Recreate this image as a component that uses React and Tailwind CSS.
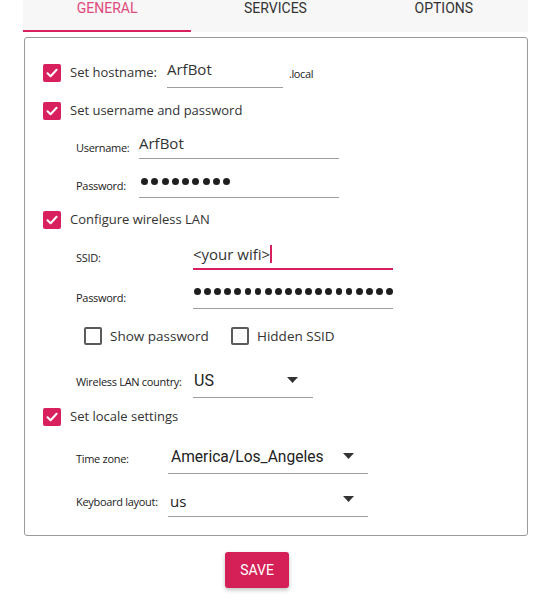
import React from 'react'

const PINK = 'bg-[#d9205e]'

function Check({ checked }) {
  if (!checked) {
    return <span className="block w-[18px] h-[18px] shrink-0 rounded-[2px] border-2 border-[#5a5a5a] bg-white" />
  }
  return (
    <span className={`flex w-[18px] h-[18px] shrink-0 items-center justify-center rounded-[2px] ${PINK}`}>
      <svg width="14" height="14" viewBox="0 0 14 14" fill="none">
        <path d="M2.5 7.2 L5.6 10.2 L11.6 3.8" stroke="white" strokeWidth="2" strokeLinecap="round" strokeLinejoin="round" />
      </svg>
    </span>
  )
}

function CheckRow({ label, checked = true, className = '' }) {
  return (
    <div className={`flex items-center h-[18px] ${className}`}>
      <Check checked={checked} />
      <span className="ml-[9px] text-[13px] text-[#333] font-['Open_Sans',sans-serif] whitespace-nowrap">{label}</span>
    </div>
  )
}

function Dots({ n }) {
  return (
    <div className="flex gap-[3.3px]">
      {Array.from({ length: n }).map((_, i) => (
        <span key={i} className="block w-[7px] h-[7px] rounded-full bg-[#1f1f1f]" />
      ))}
    </div>
  )
}

function Caret() {
  return (
    <svg width="11" height="6" viewBox="0 0 11 6">
      <path d="M0 0 H11 L5.5 6 Z" fill="#333" />
    </svg>
  )
}

function SubLabel({ children, w }) {
  return (
    <span className={`${w} shrink-0 text-[11px] text-[#222] font-['Open_Sans',sans-serif] tracking-[-0.3px] whitespace-nowrap`}>
      {children}
    </span>
  )
}

export default function App() {
  return (
    <div className="w-[538px] h-[603px] bg-white overflow-hidden">
      {/* tabs */}
      <div className="ml-[23px] w-[505px] h-[32px] bg-[#f7f7f7] flex font-['Roboto',sans-serif] text-[14px] leading-[16px]">
        <div className="flex-1 text-center text-[#de4a7c] border-b-2 border-[#d9205e]">GENERAL</div>
        <div className="flex-1 text-center text-[#333]">SERVICES</div>
        <div className="flex-1 text-center text-[#333]">OPTIONS</div>
      </div>

      {/* general panel */}
      <div className="mt-[5px] ml-[24px] w-[504px] h-[499px] border border-[#9a9a9a] rounded-[3px] pt-[20px] pl-[18px] flex flex-col">
        <div className="flex items-center h-[30px]">
          <Check checked />
          <span className="ml-[9px] w-[97px] text-[13px] text-[#333] font-['Open_Sans',sans-serif] whitespace-nowrap">Set hostname:</span>
          <div className="w-[116px] h-full border-b border-[#9e9e9e] text-[15px] leading-[18px] text-[#333] font-['Open_Sans',sans-serif] pt-[2px]">
            ArfBot
          </div>
          <span className="ml-[6px] mt-[3px] text-[11px] text-[#222] font-['Open_Sans',sans-serif] tracking-[-0.4px]">.local</span>
        </div>

        <CheckRow label="Set username and password" className="mt-[14px]" />

        <div className="mt-[15px] ml-[33px] flex items-end h-[24px]">
          <SubLabel w="w-[63px] mb-[3px]">Username:</SubLabel>
          <div className="w-[200px] h-full border-b border-[#9e9e9e] text-[15px] leading-[16px] text-[#333] font-['Open_Sans',sans-serif]">
            ArfBot
          </div>
        </div>

        <div className="mt-[15px] ml-[33px] flex items-end h-[24px]">
          <SubLabel w="w-[63px] mb-[4px]">Password:</SubLabel>
          <div className="w-[200px] h-full border-b border-[#9e9e9e] pt-[4px] pl-[2px]">
            <Dots n={9} />
          </div>
        </div>

        <CheckRow label="Configure wireless LAN" className="mt-[13px]" />

        <div className="mt-[15px] ml-[33px] flex items-end h-[26px]">
          <SubLabel w="w-[117px] mb-[4px]">SSID:</SubLabel>
          <div className="w-[200px] h-full border-b-2 border-[#d9205e] text-[15px] leading-[18px] text-[#333] font-['Open_Sans',sans-serif] flex items-start pt-[1px]">
            <span>&lt;your wifi&gt;</span>
            <span className="block w-[2px] h-[18px] bg-[#d9205e]" />
          </div>
        </div>

        <div className="mt-[14px] ml-[33px] flex items-end h-[25px]">
          <SubLabel w="w-[117px] mb-[3px]">Password:</SubLabel>
          <div className="w-[200px] h-full border-b border-[#9e9e9e] pt-[4px] pl-[1px]">
            <Dots n={20} />
          </div>
        </div>

        <div className="mt-[18px] ml-[41px] flex items-center h-[18px] font-['Open_Sans',sans-serif] text-[13.5px] text-[#333]">
          <div className="w-[147px] flex items-center">
            <Check checked={false} />
            <span className="ml-[8px] whitespace-nowrap">Show password</span>
          </div>
          <Check checked={false} />
          <span className="ml-[8px] whitespace-nowrap">Hidden SSID</span>
        </div>

        <div className="mt-[23px] ml-[33px] flex items-end h-[30px]">
          <SubLabel w="w-[117px] mb-[8px]">Wireless LAN country:</SubLabel>
          <div className="w-[120px] h-full border-b border-[#9e9e9e] flex items-start pt-[4px] pl-[1px] pr-[15px] font-['Roboto',sans-serif] text-[16px] leading-[18px] text-[#222]">
            <span className="flex-1">US</span>
            <span className="mt-[5px]"><Caret /></span>
          </div>
        </div>

        <CheckRow label="Set locale settings" className="mt-[10px]" />

        <div className="mt-[16px] ml-[33px] flex items-end h-[32px]">
          <SubLabel w="w-[92px] mb-[7px]">Time zone:</SubLabel>
          <div className="w-[200px] h-full border-b border-[#9e9e9e] flex items-start pt-[6px] pl-[3px] pr-[14px] font-['Roboto',sans-serif] text-[15.6px] leading-[18px] text-[#222]">
            <span className="flex-1">America/Los_Angeles</span>
            <span className="mt-[5px]"><Caret /></span>
          </div>
        </div>

        <div className="mt-[12px] ml-[33px] flex items-end h-[31px]">
          <SubLabel w="w-[92px] mb-[7px]">Keyboard layout:</SubLabel>
          <div className="w-[200px] h-full border-b border-[#9e9e9e] flex items-start pt-[6px] pl-[2px] pr-[14px] font-['Open_Sans',sans-serif] text-[15px] leading-[18px] text-[#222]">
            <span className="flex-1">us</span>
            <span className="mt-[4px]"><Caret /></span>
          </div>
        </div>
      </div>

      <div className="mt-[16px] ml-[225px]">
        <button className="w-[64px] h-[36px] rounded-[3px] bg-[#d41f57] text-white font-['Roboto',sans-serif] text-[14px] shadow-[0_2px_4px_rgba(0,0,0,0.25)]">
          SAVE
        </button>
      </div>
    </div>
  )
}
